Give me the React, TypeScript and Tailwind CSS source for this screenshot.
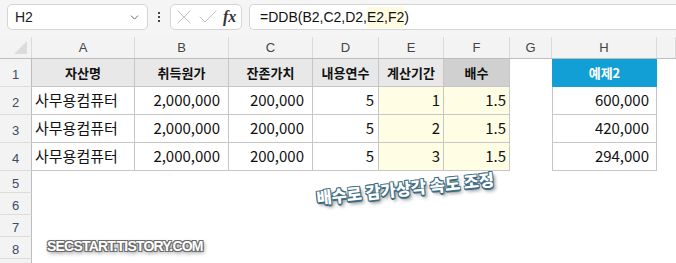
import {ChevronDown, X, Check} from "lucide-react";

const KR = "font-['Noto_Sans_CJK_KR','Noto_Sans',sans-serif]";

const colW = ["w-[32px]", "w-[103px]", "w-[94px]", "w-[84px]", "w-[66px]", "w-[65px]", "w-[66px]", "w-[42px]", "w-[105px]", "flex-1"];
const letters = ["", "A", "B", "C", "D", "E", "F", "G", "H", ""];

const tbl = "border-r border-b border-[#c6c6c6]";

const dataRows = [
  {n: 2, e: "1", h: "600,000"},
  {n: 3, e: "2", h: "420,000"},
  {n: 4, e: "3", h: "294,000"},
];

const RowHead = ({n, h}: {n?: number; h: string}) => (
  <div className={`w-[32px] ${h} shrink-0 bg-[#f3f3f3] border-r border-b border-r-[#bdbdbd] border-b-[#dcdcdc] flex items-center justify-center pt-[4px] text-[13px] text-[#3c4a66] font-['Liberation_Sans',sans-serif]`}>
    {n}
  </div>
);

export default function App() {
  return (
    <div className={`relative w-[676px] h-[263px] overflow-hidden bg-white ${KR}`}>
      {/* formula bar */}
      <div className="h-[37px] bg-[#f5f5f5] flex items-start pt-[4px] pl-[7px] gap-[7px]">
        <div className="w-[141px] h-[26px] bg-white border border-[#d4d4d4] rounded-[5px] flex items-center justify-between pl-[7px] pr-[6px]">
          <span className="text-[14px] text-[#222] font-['Liberation_Sans',sans-serif]">H2</span>
          <ChevronDown size={13} strokeWidth={1.6} className="text-[#555]" />
        </div>
        <div className="w-[8px] h-[26px] flex flex-col items-center justify-center gap-[2px]">
          <span className="w-[2px] h-[2px] bg-[#444]" />
          <span className="w-[2px] h-[2px] bg-[#444]" />
          <span className="w-[2px] h-[2px] bg-[#444]" />
        </div>
        <div className="w-[72px] h-[26px] bg-white border border-[#d4d4d4] rounded-[5px] flex items-center pl-[1px] gap-0">
          <X size={24} strokeWidth={0.9} className="text-[#b8b8b8]" />
          <Check size={24} strokeWidth={0.9} className="text-[#b8b8b8]" />
          <span className="ml-[3px] text-[16px] italic font-bold text-[#333] font-['Liberation_Serif',serif]">fx</span>
        </div>
        <div className="flex-1 h-[26px] bg-white border border-[#d4d4d4] rounded-l-[5px] border-r-0 flex items-center pl-[10px] text-[14px] text-[#111] font-['Liberation_Sans',sans-serif]">
          <span>=DDB(B2,C2,D2,</span>
          <span className="bg-[#fffbe0]">E2,F2</span>
          <span>)</span>
        </div>
      </div>

      {/* column headers */}
      <div className="flex h-[22px] bg-[#f3f3f3] border-b border-[#bdbdbd]">
        {letters.map((l, i) => (
          <div key={i} className={`${colW[i]} shrink-0 h-full border-r border-[#dadada] flex items-center justify-center text-[13px] text-[#444] font-['Liberation_Sans',sans-serif] ${i === 0 ? "relative border-[#bdbdbd]" : ""}`}>
            {i === 0 ? (
              <span className="absolute right-[4px] bottom-[4px] w-0 h-0 border-l-[13px] border-l-transparent border-b-[13px] border-b-[#dcdcdc]" />
            ) : l}
          </div>
        ))}
      </div>

      {/* row 1 */}
      <div className="flex h-[28px]">
        <RowHead n={1} h="h-[28px]" />
        {["자산명", "취득원가", "잔존가치", "내용연수", "계산기간"].map((t, i) => (
          <div key={t} className={`${colW[i + 1]} shrink-0 ${tbl} bg-[#e8e8e8] flex items-center justify-center text-[13px] font-bold text-[#111]`}>{t}</div>
        ))}
        <div className={`w-[66px] shrink-0 ${tbl} bg-[#d0d0d0] flex items-center justify-center text-[13px] font-bold text-[#111]`}>배수</div>
        <div className="w-[42px] shrink-0" />
        <div className="w-[105px] shrink-0 bg-[#129fd6] border-x border-[#129fd6] flex items-center justify-center text-[13px] font-bold text-white">예제2</div>
      </div>

      {/* rows 2-4 */}
      {dataRows.map(r => (
        <div key={r.n} className="flex h-[28px] text-[15px] text-[#111]">
          <RowHead n={r.n} h="h-[28px]" />
          <div className={`w-[103px] shrink-0 ${tbl} flex items-center pl-[3px]`}>사무용컴퓨터</div>
          <div className={`w-[94px] shrink-0 ${tbl} flex items-center justify-end pr-[8px]`}>2,000,000</div>
          <div className={`w-[84px] shrink-0 ${tbl} flex items-center justify-end pr-[8px]`}>200,000</div>
          <div className={`w-[66px] shrink-0 ${tbl} flex items-center justify-end pr-[4px]`}>5</div>
          <div className={`w-[65px] shrink-0 ${tbl} bg-[#fffee4] flex items-center justify-end pr-[3px]`}>{r.e}</div>
          <div className={`w-[66px] shrink-0 ${tbl} bg-[#fffee4] flex items-center justify-end pr-[3px]`}>1.5</div>
          <div className="w-[42px] shrink-0" />
          <div className="w-[105px] shrink-0 border-x border-b border-[#c6c6c6] flex items-center justify-end pr-[7px]">{r.h}</div>
        </div>
      ))}

      {/* rows 5-9 */}
      {[5, 6, 7, 8].map(n => (
        <div key={n} className="flex h-[22px]">
          <RowHead n={n} h="h-[22px]" />
        </div>
      ))}
      <div className="flex h-[22px]">
        <RowHead h="h-[22px]" />
      </div>

      {/* overlays */}
      <div className="absolute left-[316px] top-[176px] rotate-[-6deg] text-[16.5px] font-black text-white tracking-[0px] [text-shadow:-1px_-1px_0_#3e6d83,1px_-1px_0_#3e6d83,-1px_1px_0_#3e6d83,1px_1px_0_#3e6d83,0_2px_0_#3e6d83,2px_3px_4px_rgba(0,0,0,0.55)]">
        배수로 감가상각 속도 조정
      </div>
      <div className="absolute left-[47px] top-[236px] text-[14px] font-bold text-white tracking-[-0.8px] font-['Liberation_Sans',sans-serif] [text-shadow:-1px_-1px_0_#6a6a6a,1px_-1px_0_#6a6a6a,-1px_1px_0_#6a6a6a,1px_1px_0_#6a6a6a,1px_2px_4px_rgba(0,0,0,0.6)]">
        SECSTART.TISTORY.COM
      </div>
    </div>
  );
}
